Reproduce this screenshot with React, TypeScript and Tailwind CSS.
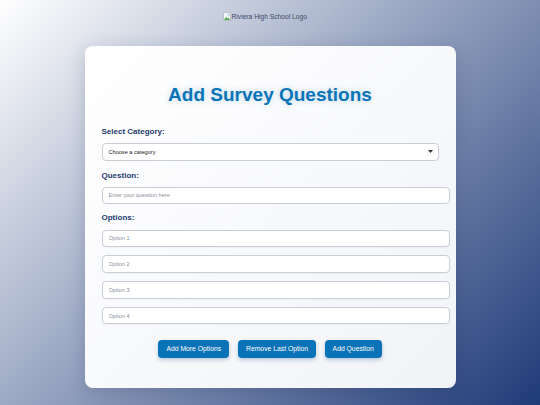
import React from "react";

const font = { fontFamily: '"Liberation Sans", Arial, sans-serif' };

function BrokenImg() {
  return (
    <svg width="8" height="9" viewBox="0 0 16 18" className="inline-block mr-[0.5px]">
      <path d="M1 1h10l4 4v12H1z" fill="#f2f4f6" stroke="#9aa3ad" strokeWidth="1" />
      <path d="M2 16l4-6 3 3 2-2 3 5z" fill="#4caf50" />
      <circle cx="11" cy="6" r="1.6" fill="#7fb2e5" />
    </svg>
  );
}

export default function App() {
  const options = ["Option 1", "Option 2", "Option 3", "Option 4"];
  return (
    <div
      className="w-full h-[405px] overflow-hidden bg-[linear-gradient(135deg,#ffffff_0%,#1e3a78_100%)] flex flex-col items-center"
      style={font}
    >
      <div className="mt-[12px] h-[9px] pr-[10px] flex items-center text-[6.7px] leading-[9px] text-[#3a4867]">
        <BrokenImg />
        <span>Riviera High School Logo</span>
      </div>
      <div className="mt-[24.5px] w-[371px] h-[342px] rounded-[8px] bg-[linear-gradient(135deg,#ffffff_0%,#f1f3f7_100%)] shadow-[0_4px_18px_rgba(15,30,70,0.18)] pt-[37px] px-[17px]">
        <h1 className="text-center text-[19px] leading-[24px] font-bold text-[#0a74b8] [text-shadow:0_0_6px_rgba(10,116,184,0.25)]">
          Add Survey Questions
        </h1>
        <div className="mt-[20.5px] text-[8px] leading-[10px] font-bold text-[#1e3a6e]">Select Category:</div>
        <div className="mt-[6px] w-[337.5px] h-[17.5px] rounded-[4px] border border-[#c9cdd6] bg-white flex items-center justify-between pl-[6px] pr-[5px]">
          <span className="text-[5.6px] text-[#222]">Choose a category</span>
          <svg width="5" height="3" viewBox="0 0 10 6">
            <path d="M0 0h10L5 6z" fill="#333" />
          </svg>
        </div>
        <div className="mt-[10px] text-[8px] leading-[10px] font-bold text-[#1e3a6e]">Question:</div>
        <input
          className="mt-[6px] block w-[348.5px] h-[17.5px] rounded-[4px] border border-[#c9cdd6] bg-white px-[6px] text-[5.6px] outline-none placeholder:text-[#8b9099]"
          placeholder="Enter your question here"
        />
        <div className="mt-[9px] text-[8px] leading-[10px] font-bold text-[#1e3a6e]">Options:</div>
        <div className="mt-[6.5px] flex flex-col gap-[8.3px]">
          {options.map((o) => (
            <input
              key={o}
              className="block w-[348.5px] h-[17.5px] rounded-[4px] border border-[#c9cdd6] bg-white px-[6px] text-[5.6px] outline-none placeholder:text-[#8b9099] shadow-[0_1px_2px_rgba(0,0,0,0.04)]"
              placeholder={o}
            />
          ))}
        </div>
        <div className="mt-[15.7px] flex justify-center gap-[8.6px]">
          {["Add More Options", "Remove Last Option", "Add Question"].map((b, i) => (
            <button
              key={b}
              className={
                "h-[17.7px] rounded-[4px] bg-[#0a72b6] text-white text-[6.8px] shadow-[0_2px_4px_rgba(0,60,120,0.25)] " +
                (i === 0 ? "w-[71px]" : i === 1 ? "w-[78.2px]" : "w-[57px]")
              }
            >
              {b}
            </button>
          ))}
        </div>
      </div>
    </div>
  );
}
